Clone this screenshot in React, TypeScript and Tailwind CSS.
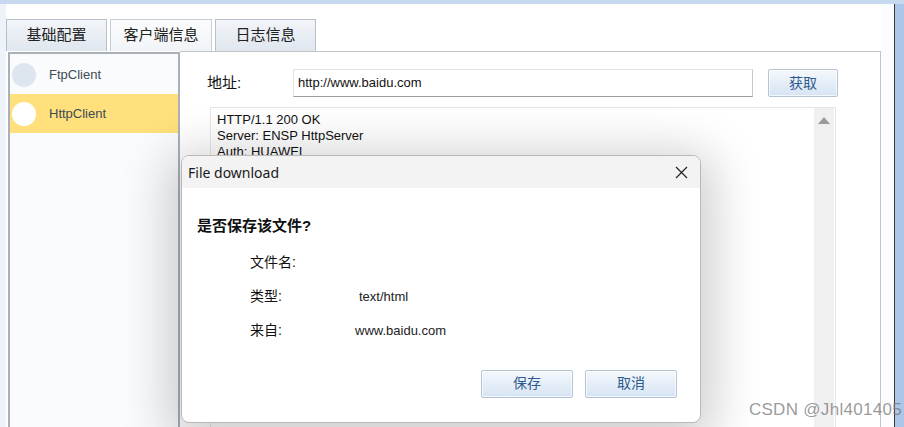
import React from "react";

const F = { fontFamily: '"Liberation Sans", "Noto Sans CJK SC", sans-serif' };

function Btn({ label, w }: { label: string; w: string }) {
  return (
    <div
      className={`${w} h-[28px] flex items-center justify-center border border-[#b5c3d3] rounded-[2px] bg-gradient-to-b from-[#f4f8fc] to-[#d6e4f3] text-[14px] text-[#2f5a8f] shadow-[inset_0_0_0_1px_rgba(255,255,255,0.7)]`}
    >
      {label}
    </div>
  );
}

export default function App() {
  return (
    <div
      className="w-[904px] h-[427px] relative overflow-hidden bg-white flex flex-col text-[#111]"
      style={F}
    >
      <div className="h-[4px] bg-[#c6d9ee] shrink-0" />
      <div className="flex flex-1 min-h-0">
        <div className="w-[6px] bg-[#eef3fa] shrink-0" />
        <div className="w-[875px] shrink-0 flex flex-col pt-[15px]">
          {/* tabs */}
          <div className="flex h-[32px] gap-[3px] shrink-0">
            <div className="w-[101px] flex items-center justify-center border border-b-0 border-[#b8bfc8] bg-gradient-to-b from-[#f2f5f9] to-[#dfe6ee] text-[15px] text-[#222]">
              基础配置
            </div>
            <div className="w-[102px] flex items-center justify-center border border-b-0 border-[#c9ced4] bg-gradient-to-b from-[#fbfcfd] to-[#f1f4f7] text-[15px] text-[#222]">
              客户端信息
            </div>
            <div className="w-[101px] flex items-center justify-center border border-b-0 border-[#b8bfc8] bg-gradient-to-b from-[#f2f5f9] to-[#dfe6ee] text-[15px] text-[#222]">
              日志信息
            </div>
          </div>
          {/* content */}
          <div className="flex flex-1 min-h-0">
            <div className="ml-[2px] mt-[1px] w-[172px] border-2 border-b-0 border-[#a9b0b8] bg-[#fafbfc] flex flex-col pt-[2px] shrink-0">
              <div className="h-[38px] flex items-center pl-[2px]">
                <div className="w-[24px] h-[24px] rounded-full bg-[#dde5ef]" />
                <span className="ml-[13px] text-[13px] text-[#3d4a58]">FtpClient</span>
              </div>
              <div className="h-[39px] flex items-center pl-[2px] bg-[#ffe07c]">
                <div className="w-[24px] h-[24px] rounded-full bg-white" />
                <span className="ml-[13px] text-[13px] text-[#3d4a58]">HttpClient</span>
              </div>
            </div>
            <div className="flex-1 border-t border-r border-[#c4c4c4] bg-white flex flex-col pl-[27px] pt-[17px]">
              <div className="flex items-center h-[28px]">
                <div className="w-[86px] text-[15px] pt-[1px]">地址:</div>
                <div className="w-[460px] h-[28px] border border-[#e2e2e2] border-b-[#9c9c9c] border-r-[#c8c8c8] flex items-center pl-[4px] text-[13px] text-[#111]">
                  http://www.baidu.com
                </div>
                <div className="ml-[15px]">
                  <Btn label="获取" w="w-[70px]" />
                </div>
              </div>
              <div className="ml-[3px] mt-[10px] w-[626px] flex-1 border border-b-0 border-[#e6e6e6] flex">
                <div className="flex-1 pl-[6px] pt-[4px] text-[13px] leading-[16px] text-[#111]">
                  <div>HTTP/1.1 200 OK</div>
                  <div>Server: ENSP HttpServer</div>
                  <div>Auth: HUAWEI</div>
                </div>
                <div className="w-[20px] mr-[1px] bg-[#f0f0f0] flex justify-center pt-[9px]">
                  <svg width="12" height="7" viewBox="0 0 12 7">
                    <path d="M6 0 L12 7 L0 7 Z" fill="#9a9a9a" />
                  </svg>
                </div>
              </div>
            </div>
          </div>
        </div>
        <div className="w-[13px] bg-[#fbfcfe] shrink-0" />
        <div className="w-[1px] bg-[#3a3a3a] shrink-0" />
        <div className="w-[9px] bg-[#aac6e8] shrink-0" />
      </div>

      {/* dialog */}
      <div className="absolute left-[181px] top-[155px] w-[520px] h-[268px] rounded-[8px] border border-[#b9b9b9] bg-white overflow-hidden shadow-[0_10px_50px_12px_rgba(0,0,0,0.2)] flex flex-col">
        <div className="h-[32px] bg-[#f3f3f3] flex items-center justify-between pl-[6px] pr-[12px] shrink-0">
          <span className="text-[14px] text-[#1a1a1a]" style={{ fontFamily: '"Noto Sans", "Liberation Sans", sans-serif' }}>
            File download
          </span>
          <svg width="13" height="13" viewBox="0 0 13 13">
            <path d="M1 1 L12 12 M12 1 L1 12" stroke="#222" strokeWidth="1.2" />
          </svg>
        </div>
        <div className="flex flex-col pl-[15px] pt-[27px]">
          <div className="text-[15px] font-semibold text-[#111]">是否保存该文件?</div>
          <div className="pl-[53px] mt-[16px] flex flex-col gap-[16px] text-[14px]">
            <div className="h-[18px] flex items-center">文件名:</div>
            <div className="h-[18px] flex items-center">
              <span className="w-[109px]">类型:</span>
              <span className="text-[13px] text-[#222]">text/html</span>
            </div>
            <div className="h-[18px] flex items-center">
              <span className="w-[105px]">来自:</span>
              <span className="text-[13px] text-[#222]">www.baidu.com</span>
            </div>
          </div>
          <div className="flex justify-end gap-[12px] pr-[23px] mt-[30px]">
            <Btn label="保存" w="w-[92px]" />
            <Btn label="取消" w="w-[92px]" />
          </div>
        </div>
      </div>

      {/* watermark */}
      <div
        className="absolute right-[2px] bottom-[5px] text-[17px] tracking-[0.3px] text-[rgba(120,120,120,0.75)]"
        style={{ fontFamily: '"Liberation Sans", sans-serif' }}
      >
        CSDN @Jhl401405
      </div>
    </div>
  );
}
